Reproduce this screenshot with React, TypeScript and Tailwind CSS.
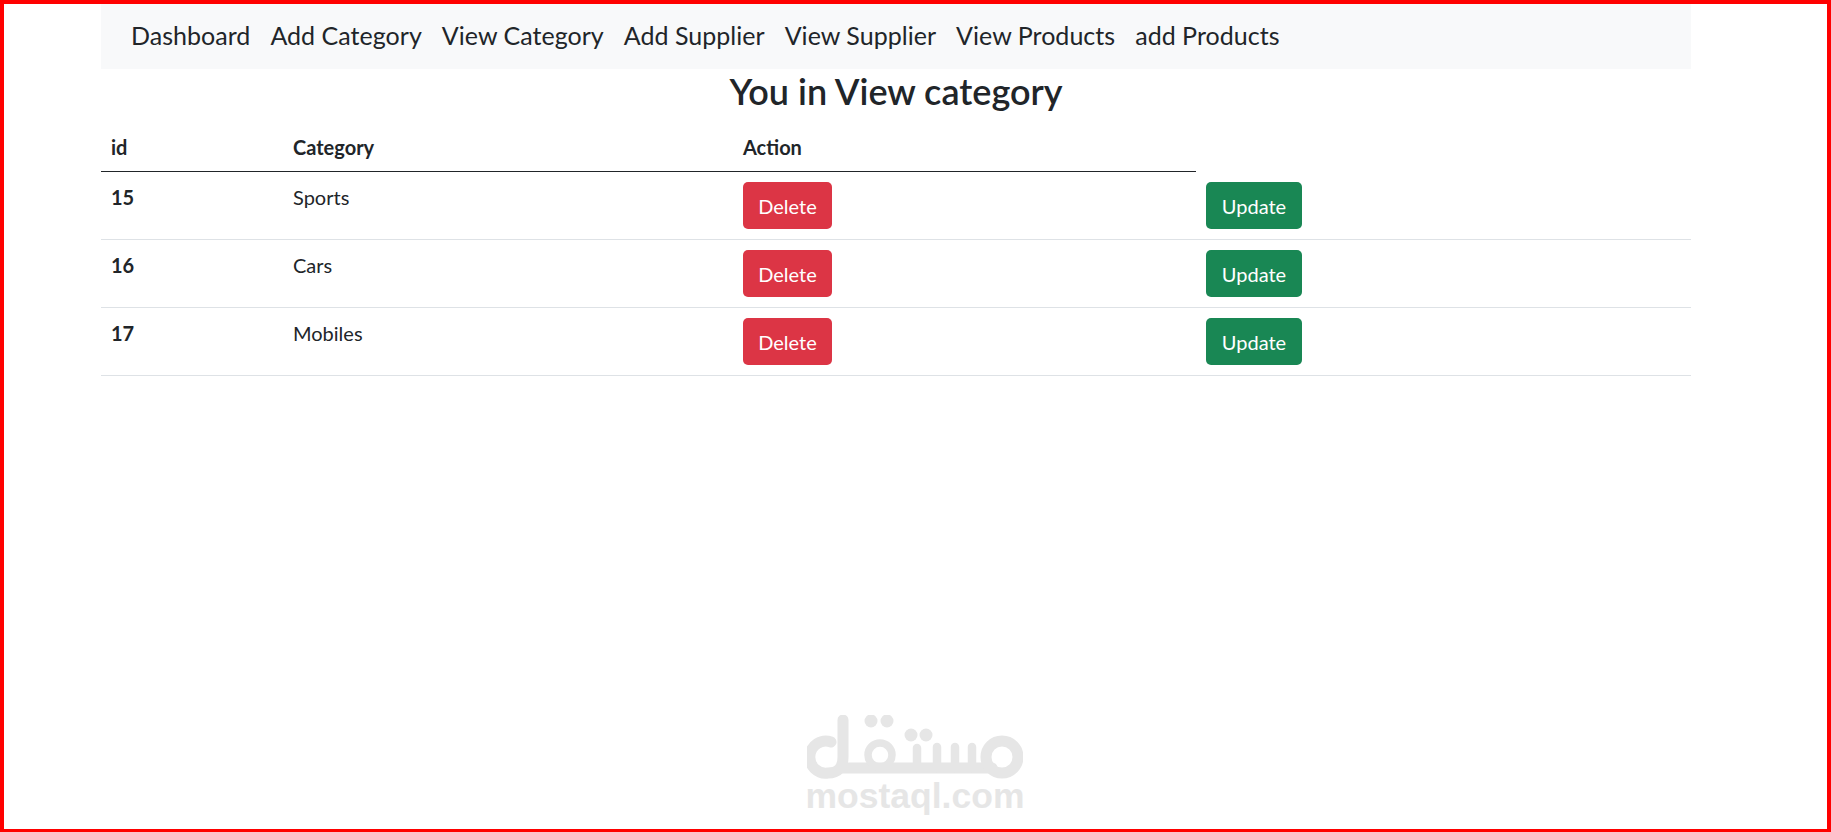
const rows = [
  { id: 15, name: 'Sports' },
  { id: 16, name: 'Cars' },
  { id: 17, name: 'Mobiles' },
];

const links = ['Dashboard', 'Add Category', 'View Category', 'Add Supplier', 'View Supplier', 'View Products', 'add Products'];

function Watermark() {
  return (
    <div className="absolute left-[803px] top-[711px] w-[216px] flex flex-col items-center pointer-events-none">
      <svg width="216" height="64" viewBox="0 0 216 64" fill="none" stroke="#e6e6e6" strokeWidth="10" strokeLinecap="round" strokeLinejoin="round">
        <path d="M36 5 V42 Q36 58 21 58 A16 16 0 1 1 24 27" strokeWidth="11" />
        <path d="M36 53 H185" strokeWidth="11" />
        <circle cx="73" cy="40" r="12" strokeWidth="7.5" />
        <circle cx="195" cy="42" r="16" strokeWidth="11" />
        <path d="M110 53 V33 M130 53 V32 M148 53 V32 M165 53 V32" strokeWidth="8.5" />
        <g fill="#e6e6e6" stroke="none">
          <circle cx="64" cy="6" r="6.5" />
          <circle cx="80" cy="6" r="6.5" />
          <circle cx="104" cy="20" r="6.5" />
          <circle cx="119" cy="20" r="6.5" />
        </g>
      </svg>
      <div className="font-['Liberation_Sans',sans-serif] font-bold text-[35.5px] leading-[32px] mt-[1px] text-[#e6e6e6]">mostaql.com</div>
    </div>
  );
}

export default function App() {
  return (
    <div className="relative h-[832px] overflow-hidden bg-white border-[#ff0000] border-t-4 border-x-4 border-b-[3px] font-['Lato',sans-serif] text-[#212529]">
      <div className="ml-[97px] w-[1590px]">
        <nav className="h-[65px] bg-[#f8f9fa] flex items-center pl-[30px] pb-[2px] gap-[20px] text-[25px]">
          {links.map((l) => (
            <a key={l} className="text-[#212529] tracking-[0.03px]">{l}</a>
          ))}
        </nav>
        <h2 className="text-center text-[36px] font-semibold leading-[44px]">You in View category</h2>
        <table className="w-full border-separate border-spacing-0 text-[20px] mt-[4px]">
          <thead>
            <tr>
              <th className="w-[182px] text-left font-bold px-[10px] h-[55px] align-bottom pb-[9px] leading-[30px] border-b border-[#212529]">id</th>
              <th className="w-[450px] text-left font-bold px-[10px] align-bottom pb-[9px] leading-[30px] border-b border-[#212529]">Category</th>
              <th className="w-[463px] text-left font-bold px-[10px] align-bottom pb-[9px] leading-[30px] border-b border-[#212529]">Action</th>
              <th />
            </tr>
          </thead>
          <tbody>
            {rows.map((r) => (
              <tr key={r.id} className="h-[68px]">
                <td className="align-top font-bold px-[10px] pt-[10px] border-b border-[#dee2e6]">{r.id}</td>
                <td className="align-top px-[10px] pt-[10px] border-b border-[#dee2e6]">{r.name}</td>
                <td className="align-top px-[10px] pt-[10px] border-b border-[#dee2e6]">
                  <button className="w-[89px] h-[47px] rounded-[5px] bg-[#dc3545] text-white text-[20px]">Delete</button>
                </td>
                <td className="align-top px-[10px] pt-[10px] border-b border-[#dee2e6]">
                  <button className="w-[96px] h-[47px] rounded-[5px] bg-[#198754] text-white text-[20px]">Update</button>
                </td>
              </tr>
            ))}
          </tbody>
        </table>
      </div>
      <Watermark />
    </div>
  );
}
